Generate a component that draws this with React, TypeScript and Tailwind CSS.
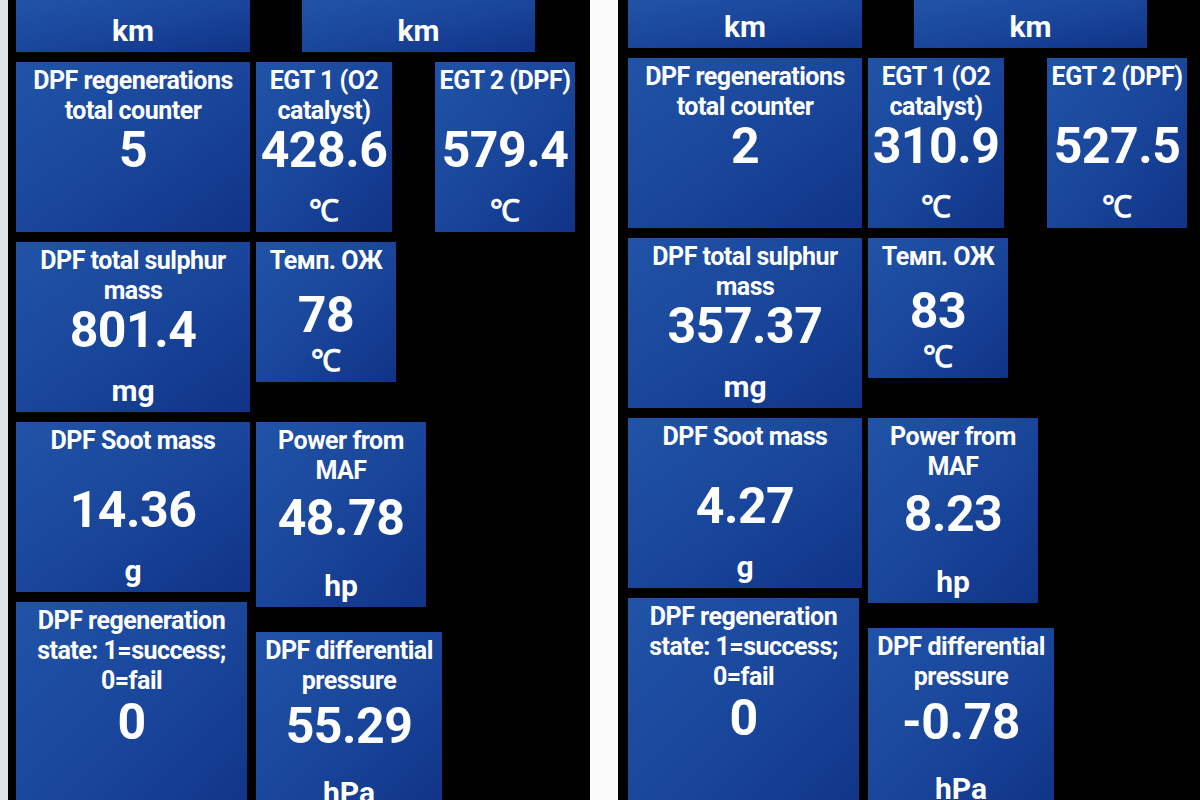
import React from 'react';

type Reading = {
  regen: string;
  egt1: string;
  egt2: string;
  sulphur: string;
  coolant: string;
  soot: string;
  power: string;
  state: string;
  diff: string;
};

const left: Reading = {
  regen: '5',
  egt1: '428.6',
  egt2: '579.4',
  sulphur: '801.4',
  coolant: '78',
  soot: '14.36',
  power: '48.78',
  state: '0',
  diff: '55.29',
};

const right: Reading = {
  regen: '2',
  egt1: '310.9',
  egt2: '527.5',
  sulphur: '357.37',
  coolant: '83',
  soot: '4.27',
  power: '8.23',
  state: '0',
  diff: '-0.78',
};

interface TileProps {
  title?: string;
  value?: string;
  unit?: string;
  className: string;
}

// title pinned to top, value centred in the tile, unit pinned to bottom
const Tile: React.FC<TileProps> = ({ title, value, unit, className }) => (
  <div
    className={`grid shrink-0 overflow-hidden bg-linear-to-br from-[#2053a7] via-[#19469b] to-[#103386] text-white font-bold font-[Roboto,sans-serif] text-center ${className}`}
  >
    {title && (
      <div className="col-start-1 row-start-1 self-start pt-1 text-[25px] leading-[30px] tracking-[-0.5px]">
        {title}
      </div>
    )}
    {value && (
      <div className="col-start-1 row-start-1 self-center mt-[6px] text-[50px] leading-[50px] tracking-[-0.5px]">
        {value}
      </div>
    )}
    {unit && (
      <div className="col-start-1 row-start-1 self-end pb-[3px] text-[30px] leading-[36px]">
        {unit}
      </div>
    )}
  </div>
);

const Phone: React.FC<{ data: Reading; kmH: string; pad: string }> = ({ data, kmH, pad }) => (
  <div className={`flex w-[582px] shrink-0 flex-col gap-[10px] overflow-hidden bg-black ${pad}`}>
    <div className="flex items-end">
      <Tile unit="km" className={`w-[234px] ${kmH}`} />
      <Tile unit="km" className={`ml-[52px] w-[233px] ${kmH}`} />
    </div>

    <div className="flex items-start gap-[6px]">
      <div className="flex flex-col gap-[10px]">
        <Tile title="DPF regenerations total counter" value={data.regen} className="h-[170px] w-[234px]" />
        <Tile title="DPF total sulphur mass" value={data.sulphur} unit="mg" className="h-[170px] w-[234px]" />
        <Tile title="DPF Soot mass" value={data.soot} unit="g" className="h-[170px] w-[234px]" />
        <Tile
          title="DPF regeneration state: 1=success; 0=fail"
          value={data.state}
          className="h-[234px] w-[231px]"
        />
      </div>

      <div className="flex flex-col items-start">
        <div className="flex items-start">
          <Tile title="EGT 1 (O2 catalyst)" value={data.egt1} unit="℃" className="h-[170px] w-[136px]" />
          <Tile title="EGT 2 (DPF)" value={data.egt2} unit="℃" className="ml-[43px] h-[170px] w-[140px]" />
        </div>
        <Tile title="Темп. ОЖ" value={data.coolant} unit="℃" className="mt-[10px] h-[140px] w-[140px]" />
        <Tile title="Power from MAF" value={data.power} unit="hp" className="mt-[40px] h-[185px] w-[170px]" />
        <Tile title="DPF differential pressure" value={data.diff} unit="hPa" className="mt-[25px] h-[182px] w-[186px]" />
      </div>
    </div>
  </div>
);

export default function App() {
  return (
    <div className="flex h-[800px] w-[1200px] overflow-hidden bg-black">
      <div className="w-[8px] shrink-0 bg-[#dfe3ea]" />
      <Phone data={left} kmH="h-[52px]" pad="pl-[8px]" />
      <div className="w-[28px] shrink-0 bg-[#fbfbfb]" />
      <Phone data={right} kmH="h-[48px]" pad="pl-[10px]" />
    </div>
  );
}
